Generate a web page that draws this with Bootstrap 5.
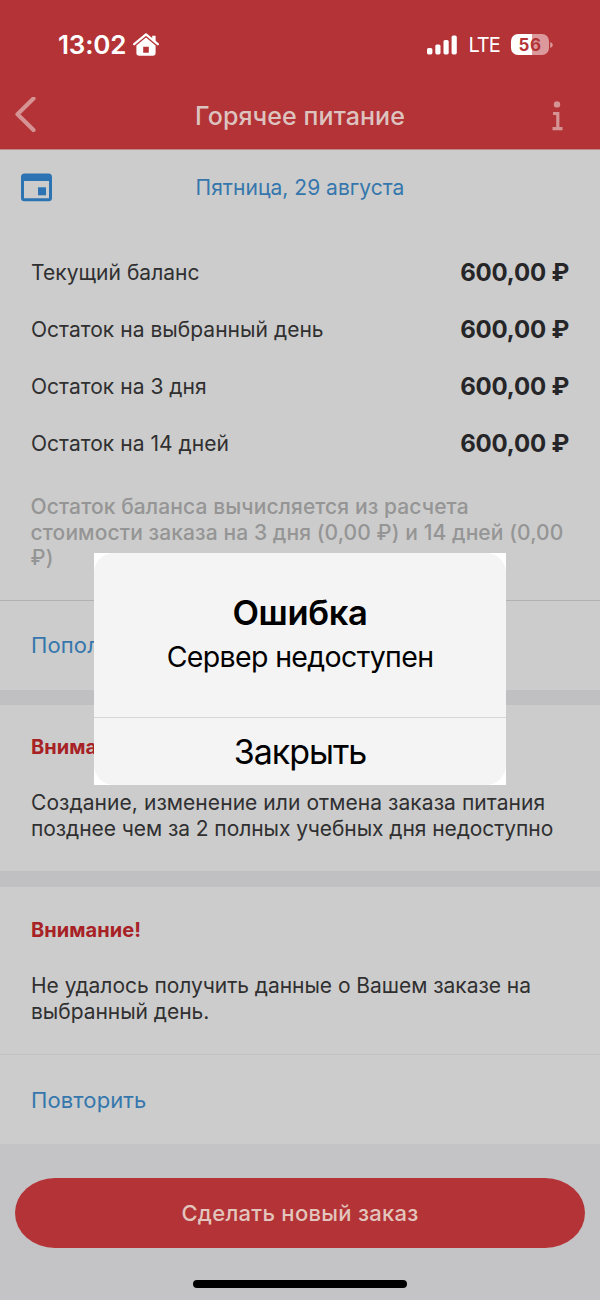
<!DOCTYPE html>
<html lang="ru">
<head>
<meta charset="utf-8">
<meta name="viewport" content="width=device-width, initial-scale=1">
<title>Горячее питание</title>
<link href="https://cdn.jsdelivr.net/npm/bootstrap@5.3.0/dist/css/bootstrap.min.css" rel="stylesheet">
<style>
  body { font-family: Inter, "Liberation Sans", sans-serif; font-size: 21px; line-height: 25.5px; background: #c4c4c6; color: #303031; }
  .phone { width: 600px; height: 1300px; }
  .app-top { height: 150px; background: #b33336; border-bottom: 1px solid #bd8a8b; }
  .status { height: 82px; padding: 8px 47px 0 58px; color: #fff; }
  .clock { font-size: 26px; font-weight: 600; letter-spacing: -.2px; line-height: 30px; }
  .house { margin: -1px 0 0 7px; }
  .net { font-size: 20px; letter-spacing: -.9px; margin-left: 11px; padding-top: 2px; }
  .batt { width: 38px; height: 21px; margin: -1px 0 0 11px; border-radius: 7px; background: linear-gradient(90deg, #fff 21px, #dc999b 21px); color: #b33336; font-size: 17px; font-weight: 700; letter-spacing: .5px; line-height: 22px; }
  .titlebar { height: 67px; padding: 0 36px 0 14px; }
  .titlebar h1 { font-size: 25px; font-weight: 500; letter-spacing: .08px; line-height: 30px; color: #ddc3c0; padding-left: 12px; }
  .sheet { background: #ccc; }
  .date-row { height: 94px; padding: 22px 0 0 21px; }
  .date-row span { color: #3577ad; letter-spacing: .03px; line-height: 31px; }
  .bal-row { height: 57px; padding: 0 31px 0 31px; letter-spacing: .03px; }
  .bal-row strong { font-size: 24px; font-weight: 700; letter-spacing: -.2px; color: #262628; }
  .note { padding: 22px 0 29px 30.6px; color: #959595; font-weight: 500; letter-spacing: .1px; border-bottom: 1px solid #b2b2b3; }
  .act { padding: 2px 0 0 31px; font-size: 22px; letter-spacing: .12px; color: #3577ad; text-decoration: none; }
  .sep { background: #c0c0c3; }
  .warn { font-size: 20px; font-weight: 700; letter-spacing: .06px; color: #a72125; }
  .msg { padding-left: 31px; }
  .order { height: 70px; margin: 34px 15px 0; border-radius: 40px / 35px; background: #b33336; color: #e2c5bd; font-size: 22px; font-weight: 500; letter-spacing: .28px; padding-top: 8px; }
  .homebar { width: 214px; height: 8px; margin-top: 32px; border-radius: 4px; background: #000; }
  .alert-frame { left: 94px; top: 553px; width: 412px; height: 232px; background: #fff; }
  .alert-body { border-radius: 20px; background: #f4f4f4; color: #000; }
  .alert-text { height: 165px; padding-top: 40px; border-bottom: 1px solid #d6d6d8; }
  .alert-text h2 { font-size: 34.5px; font-weight: 600; letter-spacing: -.35px; line-height: 40px; }
  .alert-text p { font-size: 28.5px; letter-spacing: -.65px; line-height: 36px; margin-top: 6px; }
  .alert-btn { height: 67px; font-size: 34px; letter-spacing: -1px; line-height: 40px; color: #000; padding: 3px 0 0; }
  .alert-btn span { display: block; margin-top: -3px; }
</style>
</head>
<body>
<div class="phone position-relative overflow-hidden d-flex flex-column">
  <header class="app-top flex-shrink-0">
    <div class="status d-flex align-items-center justify-content-between">
      <div class="d-flex align-items-center">
        <span class="clock">13:02</span>
        <svg class="house" width="26" height="23" viewBox="0 0 26 23" fill="none">
          <path d="M1.200 11.200 13 1.400l11.800 9.800" stroke="#fff" stroke-width="2.300" stroke-linecap="round" stroke-linejoin="round"/>
          <path d="M19.200 2.800h3.400v6.600l-3.400-2.800z" fill="#fff"/>
          <path fill-rule="evenodd" d="M13 4.500 22.600 12.600V20q0 2.800-2.800 2.800H6.200Q3.400 22.800 3.400 20V12.600zM10.200 13.800v6h5.600v-6z" fill="#fff"/>
        </svg>
      </div>
      <div class="d-flex align-items-center">
        <svg width="30" height="20" viewBox="0 0 30 20" fill="#fff"><rect x="0" y="13" width="5.400" height="6.400" rx="1.600"/><rect x="8.300" y="9.400" width="5.200" height="10" rx="1.600"/><rect x="16.500" y="5" width="5.200" height="14.400" rx="1.600"/><rect x="24.600" y=".6" width="5.200" height="18.800" rx="1.600"/></svg>
        <span class="net">LTE</span>
        <span class="batt text-center">56</span>
        <svg width="3" height="6" viewBox="0 0 3 7" style="margin-left:1px"><path d="M0 0q3 1 3 3.500T0 7z" fill="#dc999b"/></svg>
      </div>
    </div>
    <nav class="titlebar d-flex align-items-center justify-content-between">
      <svg width="24" height="38" viewBox="0 0 24 38"><path d="M19.500 1.500 3.500 17.300 19.500 33" fill="none" stroke="#d59393" stroke-width="4.200" stroke-linecap="round" stroke-linejoin="round"/></svg>
      <h1 class="m-0">Горячее питание</h1>
      <svg width="14" height="30" viewBox="0 0 14 30"><circle cx="7" cy="3.400" r="3.200" fill="#d59393"/><path d="M3 12.500H7.800V27.500M2.500 27.700H12.500" fill="none" stroke="#d59393" stroke-width="3.200"/></svg>
    </nav>
  </header>

  <section class="sheet flex-shrink-0">
    <div class="date-row d-flex align-items-start">
      <svg width="31" height="31" viewBox="0 0 31 31"><path fill-rule="evenodd" d="M3.500 1.500h24Q31 1.500 31 5v21Q31 29.300 27.500 29.300h-24Q0 29.300 0 26V5Q0 1.500 3.500 1.500zM3 9v17.300h25V9z" fill="#2b73b3"/><path d="M17 15.300h8v8h-8z" fill="#2b73b3"/></svg>
      <span class="flex-fill text-center pe-5 me-1">Пятница, 29 августа</span>
    </div>
    <div class="bal-row d-flex align-items-center justify-content-between"><span>Текущий баланс</span><strong>600,00 ₽</strong></div>
    <div class="bal-row d-flex align-items-center justify-content-between"><span>Остаток на выбранный день</span><strong>600,00 ₽</strong></div>
    <div class="bal-row d-flex align-items-center justify-content-between"><span>Остаток на 3 дня</span><strong>600,00 ₽</strong></div>
    <div class="bal-row d-flex align-items-center justify-content-between"><span>Остаток на 14 дней</span><strong>600,00 ₽</strong></div>
    <div class="note text-nowrap">Остаток баланса вычисляется из расчета<br>стоимости заказа на 3 дня (0,00 ₽) и 14 дней (0,00<br>₽)</div>
    <a class="act d-flex align-items-center" style="height:89px">Пополнить</a>
  </section>
  <div class="sep flex-shrink-0" style="height:15px"></div>

  <section class="sheet msg flex-shrink-0" style="height:166px;padding-top:30.500px">
    <div class="warn">Внимание!</div>
    <div class="text-nowrap" style="margin-top:29.500px"><span style="letter-spacing:.06px">Создание, изменение или отмена заказа питания</span><br><span style="letter-spacing:-.07px">позднее чем за 2 полных учебных дня недоступно</span></div>
  </section>
  <div class="sep flex-shrink-0" style="height:16px"></div>

  <section class="sheet flex-shrink-0" style="height:257px">
    <div class="msg border-bottom" style="height:168px;padding-top:31px;border-color:#c2c2c4!important">
      <div class="warn">Внимание!</div>
      <div class="text-nowrap" style="margin-top:30px;letter-spacing:-.04px">Не удалось получить данные о Вашем заказе на<br>выбранный день.</div>
    </div>
    <a class="act d-flex align-items-center" style="height:90px">Повторить</a>
  </section>

  <button class="order btn border-0 flex-shrink-0">Сделать новый заказ</button>
  <div class="homebar mx-auto flex-shrink-0"></div>

  <div class="alert-frame position-absolute" role="alertdialog">
    <div class="alert-body h-100 text-center">
      <div class="alert-text">
        <h2 class="m-0">Ошибка</h2>
        <p class="mb-0">Сервер недоступен</p>
      </div>
      <button class="alert-btn btn border-0 w-100"><span>Закрыть</span></button>
    </div>
  </div>
</div>
<script src="https://cdn.jsdelivr.net/npm/bootstrap@5.3.0/dist/js/bootstrap.bundle.min.js"></script>
</body>
</html>
